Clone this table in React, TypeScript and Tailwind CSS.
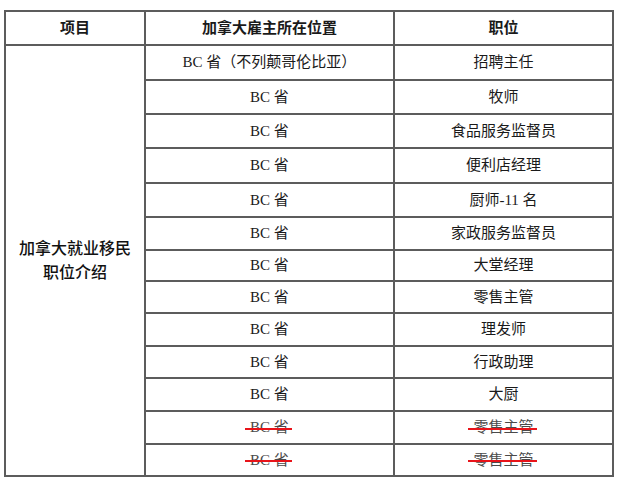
import React from "react";

type Row = { place: string; job: string; h: string; struck?: boolean };

const rows: Row[] = [
  { place: "BC 省（不列颠哥伦比亚）", job: "招聘主任", h: "h-[35px]" },
  { place: "BC 省", job: "牧师", h: "h-[34px]" },
  { place: "BC 省", job: "食品服务监督员", h: "h-[34px]" },
  { place: "BC 省", job: "便利店经理", h: "h-[35px]" },
  { place: "BC 省", job: "厨师-11 名", h: "h-[34px]" },
  { place: "BC 省", job: "家政服务监督员", h: "h-[33px]" },
  { place: "BC 省", job: "大堂经理", h: "h-[31px]" },
  { place: "BC 省", job: "零售主管", h: "h-[32px]" },
  { place: "BC 省", job: "理发师", h: "h-[33px]" },
  { place: "BC 省", job: "行政助理", h: "h-[32px]" },
  { place: "BC 省", job: "大厨", h: "h-[33px]" },
  { place: "BC 省", job: "零售主管", h: "h-[33px]", struck: true },
  { place: "BC 省", job: "零售主管", h: "h-[32px]", struck: true },
];

const cell = "border-2 border-[#5c5c5c] text-center align-middle p-0";

// red strike line drawn over the text, a little wider than the glyphs
const Struck: React.FC<{ children: React.ReactNode }> = ({ children }) => (
  <span className="relative inline-block text-[#4a4a4a]">
    {children}
    <span className="absolute left-[-5px] right-[-3px] top-1/2 h-[2px] bg-[#e8141a]" />
  </span>
);

export default function App() {
  return (
    <div
      className="w-[620px] h-[481px] bg-white pt-[10px] pl-[4px] text-[15px] text-[#1a1a1a]"
      style={{ fontFamily: '"Liberation Serif", "Noto Sans CJK SC", serif' }}
    >
      <table className="table-fixed border-collapse w-[608px]">
        <colgroup>
          <col className="w-[140px]" />
          <col className="w-[249px]" />
          <col className="w-[219px]" />
        </colgroup>
        <thead>
          <tr className="h-[34px]">
            <th className={`${cell} font-semibold`}>项目</th>
            <th className={`${cell} font-semibold`}>加拿大雇主所在位置</th>
            <th className={`${cell} font-semibold`}>职位</th>
          </tr>
        </thead>
        <tbody>
          {rows.map((r, i) => (
            <tr key={i} className={r.h}>
              {i === 0 && (
                <td
                  rowSpan={rows.length}
                  className={`${cell} text-[16px] font-medium leading-[24px] text-[#111]`}
                >
                  加拿大就业移民
                  <br />
                  职位介绍
                </td>
              )}
              <td className={cell}>{r.struck ? <Struck>{r.place}</Struck> : r.place}</td>
              <td className={cell}>{r.struck ? <Struck>{r.job}</Struck> : r.job}</td>
            </tr>
          ))}
        </tbody>
      </table>
    </div>
  );
}
